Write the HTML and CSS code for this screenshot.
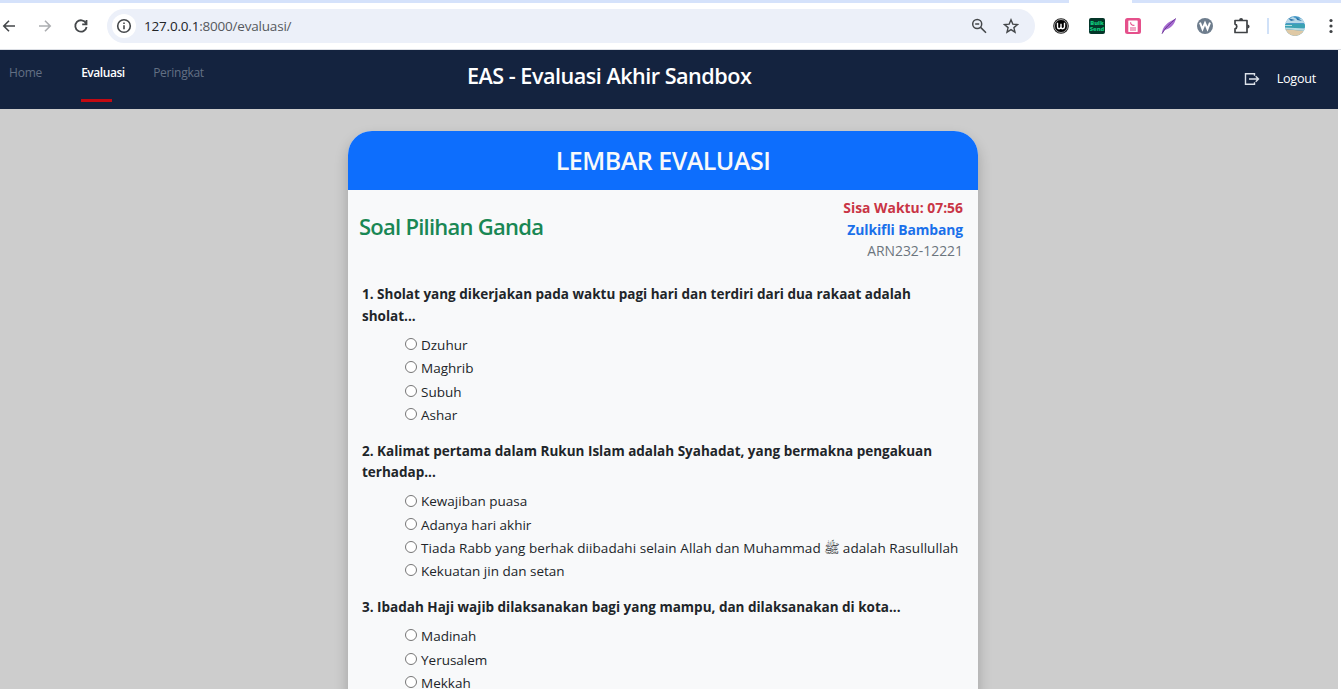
FILE: index.html
```html
<!DOCTYPE html>
<html lang="id">
<head>
<meta charset="utf-8">
<title>EAS - Evaluasi Akhir Sandbox</title>
<link rel="stylesheet" href="styles.css">
</head>
<body>
<div class="tabstrip"><div class="active-tab"></div></div>
<div class="toolbar">
  <svg class="icon back" viewBox="0 0 16 16"><path d="M14 8H3M8 2.8 2.8 8 8 13.2"/></svg>
  <svg class="icon forward" viewBox="0 0 16 16"><path d="M2 8h11M8 2.8 13.2 8 8 13.2"/></svg>
  <svg class="icon reload" viewBox="0 0 16 16"><path d="M13 5.2A5.7 5.7 0 1 0 13.6 9M13.5 2v4.3H9.2"/></svg>
  <div class="address">
    <span class="info"><svg class="icon" viewBox="0 0 16 16"><circle cx="8" cy="8" r="6.3"/><path d="M8 7.3v4M8 4.4v1.5"/></svg></span>
    <span class="url">127.0.0.1<span class="url-rest">:8000/evaluasi/</span></span>
    <svg class="icon magnifier" viewBox="0 0 16 16"><circle cx="6.2" cy="6" r="4.5"/><path d="M9.6 9.4 15 14.8M4.2 6h4"/></svg>
    <svg class="icon star" viewBox="0 0 16 16"><path d="m8 1.8 1.8 4.3 4.7.4-3.6 3.1 1.1 4.6L8 11.7l-4 2.5 1.1-4.6L1.5 6.5l4.7-.4z"/></svg>
  </div>
  <div class="extensions">
    <svg viewBox="0 0 16 16"><circle cx="8" cy="8" r="7.8" fill="#222"/><circle cx="8" cy="8" r="6.5" fill="#000" stroke="#fff" stroke-width=".6"/><path d="M4.5 4.7v4.2q0 1.8 1.7 1.8T8 8.9V5.7v3.2q0 1.8 1.7 1.8t1.8-1.8V4.7" fill="none" stroke="#fff" stroke-width="1.4"/></svg>
    <span class="bulk">Bulk<br>Send</span>
    <svg viewBox="0 0 16 16"><rect width="16" height="16" rx="2.5" fill="#e5508b"/><rect x="3.3" y="2.5" width="9.4" height="11.5" rx=".6" fill="#fff"/><path d="M5.6 4.2c0 2 1 3.2 3.8 3.2M5 10h6M5 12h6" fill="none" stroke="#e5508b" stroke-width="1.1"/></svg>
    <svg viewBox="0 0 16 16"><path d="M1 15.7C1 9 6.5 4.2 14.8.6 14 6 10.5 10 3.5 12.3z" fill="#a66bd0"/><path d="M1 15.7C4 9.5 9 6 14.8.6" fill="none" stroke="#6b3795"/></svg>
    <svg viewBox="0 0 16 16"><circle cx="8" cy="8" r="8" fill="#6e7d8d"/><path d="m3 4.6 2.5 6.4L8 5l2.5 6L13 4.6" fill="none" stroke="#fff" stroke-width="2"/></svg>
    <svg class="puzzle" viewBox="0 0 18 18"><path d="M2 3.5h12v12H2v-3.6c2.4-.6 2.4-4.2 0-4.8z"/><path class="knob" d="M6.1 3.2a2 2.2 0 0 1 4 0zM14.4 7.4a2.2 2 0 0 1 0 4z"/></svg>
    <span class="divider"></span>
    <svg class="avatar" viewBox="0 0 20 20"><defs><clipPath id="round"><circle cx="10" cy="10" r="10"/></clipPath></defs><g clip-path="url(#round)"><path fill="#4a9bc9" d="M0 0h20v20H0z"/><path fill="#b9d9e8" d="M0 4 8 1l4 2 8-1v5H0z"/><path fill="#2f76aa" d="M3 2 10 4l-4 1zM11 1l6 4-5-1z"/><path fill="#3aa2b3" d="M0 8h20v4H0z"/><path fill="#b8dde2" d="M0 9h7v1H0zM0 11.5l20 1V15L0 13z"/><path fill="#dfc9a5" d="M0 13.2 20 15v5H0z"/></g></svg>
    <svg class="dots" viewBox="0 0 4 16"><circle cx="2" cy="2.5" r="1.6"/><circle cx="2" cy="8" r="1.6"/><circle cx="2" cy="13.5" r="1.6"/></svg>
  </div>
</div>
<div class="page">
  <header class="navbar">
    <nav class="links"><a class="home">Home</a><a class="current">Evaluasi</a><a class="rank">Peringkat</a></nav>
    <h1 class="brand"><span>EAS - Evaluasi Akhir Sandbox</span></h1>
    <div class="logout"><svg viewBox="0 0 16 16"><path d="M10.5 4.8V2.7h-9v10.6h9v-2.1M5 8h9.2M11.7 5.2 14.5 8l-2.8 2.8"/></svg><a>Logout</a></div>
  </header>
  <main class="card">
    <h2 class="card-title"><span>LEMBAR EVALUASI</span></h2>
    <div class="summary">
      <h3 class="section"><span>Soal Pilihan Ganda</span></h3>
      <div class="student"><span class="time">Sisa Waktu: 07:56</span><span class="name">Zulkifli Bambang</span><span class="code">ARN232-12221</span></div>
    </div>
    <section class="question">
      <p class="prompt">1. Sholat yang dikerjakan pada waktu pagi hari dan terdiri dari dua rakaat adalah<br>sholat...</p>
      <label><i></i><span>Dzuhur</span></label>
      <label><i></i><span>Maghrib</span></label>
      <label><i></i><span>Subuh</span></label>
      <label><i></i><span>Ashar</span></label>
    </section>
    <section class="question">
      <p class="prompt">2. Kalimat pertama dalam Rukun Islam adalah Syahadat, yang bermakna pengakuan<br>terhadap...</p>
      <label><i></i><span>Kewajiban puasa</span></label>
      <label><i></i><span>Adanya hari akhir</span></label>
      <label><i></i><span class="long">Tiada Rabb yang berhak diibadahi selain Allah dan Muhammad <b class="honorific">ﷺ</b> adalah Rasullullah</span></label>
      <label><i></i><span>Kekuatan jin dan setan</span></label>
    </section>
    <section class="question">
      <p class="prompt">3. Ibadah Haji wajib dilaksanakan bagi yang mampu, dan dilaksanakan di kota...</p>
      <label><i></i><span>Madinah</span></label>
      <label><i></i><span>Yerusalem</span></label>
      <label><i></i><span>Mekkah</span></label>
    </section>
  </main>
</div>
</body>
</html>
```
FILE: styles.css
```css
* { box-sizing: border-box; }
html, body { height: 100%; }
body { margin: 0; overflow: hidden; background: #fff; font-family: "Open Sans", "Noto Sans", sans-serif; color: #212529; display: flex; flex-direction: column; }
h1, h2, h3, p { margin: 0; }
.tabstrip { height: 3px; flex: none; background: #d5e2fb; padding-left: 1069px; }
.active-tab { width: 63px; height: 3px; background: #fff; }
.toolbar { height: 47px; flex: none; display: flex; align-items: center; padding: 0 0 1px; border-bottom: 1px solid #dcdfe5; }
.icon { width: 16px; height: 16px; fill: none; stroke: #44474a; stroke-width: 1.6; flex: none; }
.back { margin-left: 1px; }
.forward { margin-left: 20px; stroke: #acaeb1; }
.reload { margin-left: 20px; stroke-width: 1.8; }
.address { width: 928px; height: 34px; border-radius: 17px; background: #ecf0f9; margin-left: 18px; display: flex; align-items: center; padding: 0 16px 0 5px; flex: none; }
.info { width: 24px; height: 24px; border-radius: 50%; background: #fff; display: flex; align-items: center; justify-content: center; }
.url { font-size: 13.5px; letter-spacing: -.2px; margin-left: 8px; flex: 1; color: #222428; white-space: nowrap; }
.url-rest { color: #56595e; }
.star { margin-left: 16px; stroke-width: 1.4; }
.magnifier { stroke-width: 1.5; }
.extensions { display: flex; align-items: center; margin-left: 18px; flex: none; }
.extensions > svg { width: 16px; height: 16px; margin-right: 20px; flex: none; }
.bulk { width: 16px; height: 16px; background: #053629; border-radius: 2px; color: #10c77c; font: 800 5.8px/6px "Open Sans", sans-serif; text-align: center; padding-top: 2px; margin-right: 20px; }
.extensions .puzzle { width: 18px; height: 18px; margin-right: 16px; fill: none; stroke: #3f4245; stroke-width: 1.7; stroke-linejoin: round; }
.knob { fill: #3f4245; stroke: none; }
.divider { width: 2px; height: 16px; background: #d0e1f8; margin-right: 16px; }
.extensions .avatar { width: 20px; height: 20px; margin-right: 24px; }
.extensions .dots { width: 4px; height: 16px; margin: 0; fill: #3f4245; }

.page { width: 1338px; flex: 1; min-height: 0; overflow: hidden; background: #cdcdcd; }
.navbar { height: 59px; background: #14233f; display: grid; grid-template-columns: 467px 1fr auto; padding-right: 22px; color: #fff; }
.links { display: flex; align-items: flex-start; padding: 14px 0 0 9px; font-size: 12px; line-height: 18px; color: #637084; }
.home { letter-spacing: -.2px; }
.current { color: #fff; font-weight: 600; letter-spacing: -.45px; width: 43px; margin-left: 39px; white-space: nowrap; }
.current::after { content: ""; display: block; width: 31px; height: 3px; margin-top: 17px; background: #c30a12; }
.rank { margin-left: 29px; letter-spacing: -.25px; }
.brand { font-size: 21.6px; line-height: 26px; font-weight: 600; letter-spacing: -.5px; padding-top: 13px; }
.logout { display: flex; gap: 17px; align-items: center; font-size: 12.6px; letter-spacing: -.25px; height: 57px; }
.logout svg { width: 16px; height: 16px; fill: none; stroke: #dde2ea; stroke-width: 1.4; }
.card { width: 630px; height: 700px; margin: 22px 0 0 348px; background: #f8f9fa; border-radius: 24px 24px 0 0; box-shadow: 0 7px 14px rgba(0, 0, 0, .22); }
.card-title { height: 59px; background: #0d6efd; color: #f8f9fa; border-radius: 24px 24px 0 0; text-align: center; font-size: 25px; letter-spacing: -.5px; line-height: 59px; font-weight: 600; }
.summary { height: 94.3px; display: flex; justify-content: space-between; padding: 7px 15px 0 11px; }
.section { color: #198754; font-size: 22px; letter-spacing: -.75px; line-height: 30px; font-weight: 600; padding-top: 14px; }
.student { display: flex; flex-direction: column; align-items: flex-end; font-size: 13.9px; line-height: 21.6px; }
.time { color: #c93545; font-weight: 700; }
.name { color: #1a70ea; font-weight: 700; letter-spacing: -.1px; }
.code { color: #6c757d; }
.question { padding-left: 14px; margin-bottom: 13.6px; font-size: 13.5px; white-space: nowrap; }
.prompt { font-weight: 700; line-height: 21.6px; margin-bottom: 6.5px; }
.question label { height: 23.3px; display: flex; align-items: center; padding-left: 43px; line-height: 23.3px; }
.question i { width: 12px; height: 12px; border: 1px solid #767676; border-radius: 50%; background: #fff; margin: 0 4px 3px 0; }
.long { letter-spacing: .07px; }
.honorific { font: 13px/14px "DejaVu Sans", sans-serif; display: inline-block; width: 15px; }
```
